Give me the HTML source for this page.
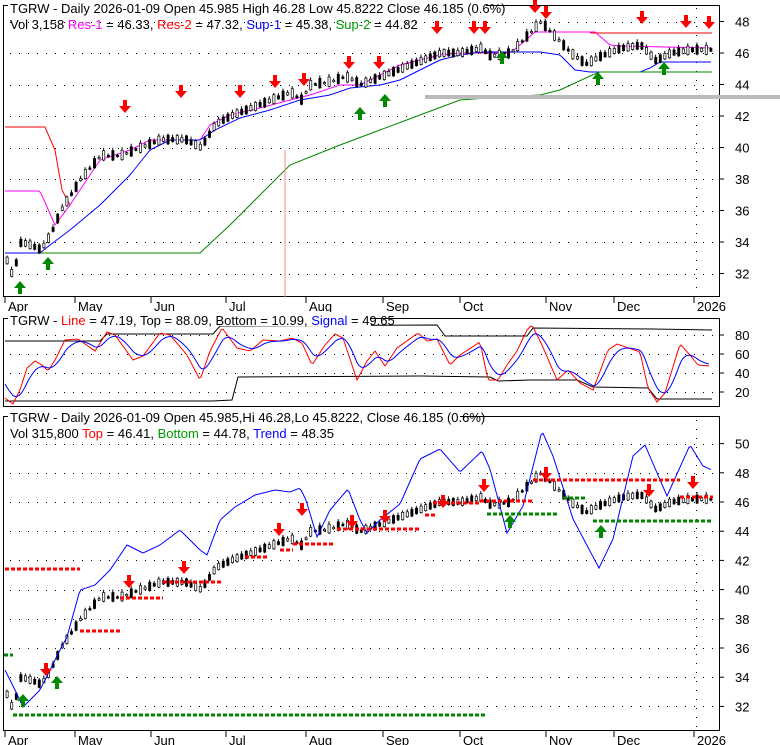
<!DOCTYPE html>
<html><head><meta charset="utf-8"><style>
body{margin:0;background:#fff;width:780px;height:745px;overflow:hidden}
svg{display:block}
text{font-family:"Liberation Sans",sans-serif;font-size:13px}
</style></head><body>
<svg id="s" width="780" height="745" xmlns="http://www.w3.org/2000/svg">
<rect width="780" height="745" fill="#fff"/>
<rect x="3.5" y="5.5" width="716" height="291" fill="none" stroke="#000"/>
<rect x="3.5" y="318.5" width="716" height="88" fill="none" stroke="#000"/>
<rect x="3.5" y="416.5" width="716" height="314" fill="none" stroke="#000"/>
<g id="g"></g>
<rect x="8" y="0" width="478" height="15" fill="#fff"/>
<text x="10" y="13">TGRW - Daily 2026-01-09 Open 45.985  High 46.28  Low 45.8222  Close 46.185 (0.6%)</text>
<text x="10" y="29">Vol 3,158 <tspan fill="#f0f">Res-1</tspan> = 46.33, <tspan fill="#f00">Res-2</tspan> = 47.32, <tspan fill="#00f">Sup-1</tspan> = 45.38, <tspan fill="#090">Sup-2</tspan> = 44.82</text>
<rect x="8" y="312" width="363" height="14" fill="#fff"/>
<text x="10" y="325">TGRW - <tspan fill="#f00">Line</tspan> = 47.19, Top = 88.09, Bottom = 10.99, <tspan fill="#00f">Signal</tspan> = 49.65</text>
<rect x="8" y="410" width="452" height="14" fill="#fff"/>
<text x="10" y="422">TGRW - Daily 2026-01-09 Open 45.985,Hi 46.28,Lo 45.8222, Close 46.185 (0.6%)</text>
<text x="10" y="438">Vol 315,800 <tspan fill="#f00">Top</tspan> = 46.41, <tspan fill="#090">Bottom</tspan> = 44.78, <tspan fill="#00f">Trend</tspan> = 48.35</text>
</svg>
<script>
var g=document.getElementById('g'),h='';
function P(pts,c,w,extra){h+='<polyline fill="none" stroke="'+c+'" stroke-width="'+(w||1)+'" '+(extra||'')+' points="'+pts.map(function(p){return p.join(',')}).join(' ')+'"/>';}
function T(x,y,s){h+='<text x="'+x+'" y="'+y+'">'+s+'</text>';}
function dots(y,x0,x1){for(var x=x0;x<x1;x+=9)h+='<rect x="'+x+'" y="'+y+'" width="1" height="1" fill="#000"/>';}
function vdots(x,y0,y1){for(var y=y0;y<y1;y+=9)h+='<rect x="'+x+'" y="'+y+'" width="1" height="1" fill="#000"/>';}
var months=[['Apr',8],['May',78],['Jun',154],['Jul',229],['Aug',309],['Sep',386],['Oct',463],['Nov',549],['Dec',617],['2026',697]];
for(var v=32;v<=48;v+=2){var y=53+(46-v)*15.75;if(y>8&&y<295){dots(Math.round(y),10,718);h+='<line x1="720" y1="'+y+'" x2="724" y2="'+y+'" stroke="#000"/>';T(735,y+5,v);}}
for(var v=20;v<=80;v+=20){var y=392-(v-20)/60*57;dots(Math.round(y),10,718);h+='<line x1="720" y1="'+y+'" x2="724" y2="'+y+'" stroke="#000"/>';T(735,y+5,v);}
for(var v=32;v<=50;v+=2){var y=502+(46-v)*14.6;dots(Math.round(y),10,718);h+='<line x1="720" y1="'+y+'" x2="724" y2="'+y+'" stroke="#000"/>';T(735,y+5,v);}
months.forEach(function(m){h+='<line x1="'+(m[1]-3)+'" y1="297" x2="'+(m[1]-3)+'" y2="303" stroke="#000"/>';T(m[1],311,m[0]);
 h+='<line x1="'+(m[1]-3)+'" y1="731" x2="'+(m[1]-3)+'" y2="737" stroke="#000"/>';T(m[1],745,m[0]);});
vdots(696,8,296);vdots(696,420,730);
function interp(K,x){if(x<=K[0][0])return K[0][1];for(var i=0;i<K.length-1;i++)if(x<=K[i+1][0]){var t=(x-K[i][0])/(K[i+1][0]-K[i][0]);return K[i][1]+t*(K[i+1][1]-K[i][1]);}return K[K.length-1][1];}
var K=[[5,33],[12,31.8],[20,34],[30,33.8],[40,33.5],[50,34.5],[60,36],[70,37],[80,38],[100,39.5],[120,39.5],[140,40],[160,40.5],[185,40.5],[200,40],[215,41.5],[230,42],[250,42.5],[270,43],[290,43.5],[300,43],[310,44],[330,44.2],[345,44.5],[360,44],[380,44.5],[400,45],[420,45.5],[440,46],[460,46],[480,46.3],[490,45.8],[510,46],[525,47],[540,48],[555,47],[570,46],[585,45.3],[600,45.8],[620,46.3],[640,46.5],[655,45.5],[670,46],[690,46.2],[712,46.2]];
function val(x){return interp(K,x);}
function y1(v){return 53+(46-v)*15.75;}function y3(v){return 502+(46-v)*14.6;}
function curve(KP){var o=[];for(var x=KP[0][0];x<=KP[KP.length-1][0];x+=2)o.push([x,interp(KP,x)]);return o;}
P([[5,127],[45,127],[55,150],[62,190],[70,205]],'#f00');
P(curve([[5,191],[40,191],[55,225],[70,205],[100,160],[130,150],[150,140],[200,140],[210,125],[230,115],[260,108],[290,100],[310,95],[340,85],[360,85],[380,75],[400,65],[420,60],[440,55],[460,53],[510,53],[520,45],[535,32],[595,32],[610,45],[620,46],[712,48]]),'#f0f');
P(curve([[5,253],[40,253],[50,245],[70,230],[100,205],[130,175],[150,150],[170,140],[200,140],[215,130],[240,118],[270,110],[300,100],[330,95],[350,88],[380,85],[400,80],[420,70],[440,60],[460,55],[480,52],[540,52],[560,55],[575,70],[590,72],[640,72],[650,68],[660,62],[712,62]]),'#00f');
P([[40,253],[200,253],[230,225],[260,195],[290,165],[340,145],[380,130],[420,115],[460,100],[500,97],[540,95],[560,90],[590,76],[600,72],[712,72]],'#080');
P([[425,97],[780,97]],'#bbb',4);
P([[590,33],[712,33]],'#f00');
P([[285,150],[285,297]],'#f88');
function candles(yf){for(var x=6;x<=712;x+=4.6){var v=val(x),d=Math.sin(x*1.7)*0.3,o=v+d,c=v-d;var ya=yf(o),yb=yf(c),top=Math.min(ya,yb),bh=Math.max(1.5,Math.abs(ya-yb));var hi=top-1-Math.abs(Math.sin(x))*2,lo=top+bh+1;
h+='<line x1="'+(x+1)+'" y1="'+hi+'" x2="'+(x+1)+'" y2="'+lo+'" stroke="#000"/>';h+='<rect x="'+x+'" y="'+top+'" width="2.2" height="'+bh+'" fill="'+(o>c?'#000':'#fff')+'" stroke="#000" stroke-width="0.7"/>';}}
candles(y1);candles(y3);
function arrowD(x,y){h+='<path d="M'+(x-2)+','+(y-12)+'h4v6h4l-6,7l-6,-7h4z" fill="#f00"/>';}
function arrowU(x,y){h+='<path d="M'+(x-2)+','+(y+12)+'h4v-6h4l-6,-7l-6,7h4z" fill="#080"/>';}
[[125,112],[181,97],[240,97],[275,87],[304,85],[349,68],[379,68],[437,33],[474,33],[485,33],[535,12],[546,18],[642,23],[686,27],[709,28]].forEach(function(a){arrowD(a[0],a[1])});
[[20,282],[48,258],[360,108],[385,95],[502,52],[598,73],[664,63]].forEach(function(a){arrowU(a[0],a[1])});
// panel2
var R=[[5,398],[13,404],[20,390],[27,368],[35,361],[42,365],[48,371],[55,360],[65,340],[78,339],[95,351],[107,332],[115,335],[133,360],[143,356],[160,333],[170,335],[187,355],[200,380],[210,351],[222,328],[237,348],[250,351],[263,340],[280,341],[292,338],[302,343],[312,365],[325,345],[335,334],[343,338],[357,380],[367,361],[375,351],[385,366],[397,348],[418,333],[427,341],[437,339],[450,365],[460,355],[480,342],[488,380],[498,380],[507,365],[517,351],[527,330],[532,325],[542,345],[557,380],[568,370],[580,383],[593,390],[608,350],[617,344],[640,352],[648,388],[657,402],[665,393],[680,344],[690,355],[698,365],[710,366]];
var ln=curve(R),sig=[],sv=380;for(var i=0;i<ln.length;i++){sv=sv+(ln[i][1]-sv)*0.22;sig.push([ln[i][0],sv]);}
P([[5,401],[213,401],[232,400],[238,377],[420,376],[490,377],[498,381],[530,380],[577,380],[593,387],[648,388],[657,399],[712,399]],'#000');
P([[5,341],[100,341],[107,334],[213,334],[220,326],[437,325],[445,336],[527,336],[533,328],[653,329],[712,330]],'#000');
P(ln,'#f00');P(sig,'#00f');
// panel3
P(curve([[5,670],[15,690],[23,707],[40,690],[60,650],[67,637],[80,590],[95,585],[110,570],[127,545],[143,553],[160,545],[180,530],[200,550],[207,555],[220,520],[235,507],[255,495],[275,490],[290,492],[300,488],[306,500],[317,537],[330,510],[348,489],[360,520],[367,533],[380,520],[400,504],[420,459],[440,449],[460,472],[482,451],[490,469],[507,533],[523,506],[542,431],[553,456],[573,519],[599,568],[613,539],[633,456],[645,445],[667,496],[690,445],[703,466],[712,470]]),'#00f');
function dash(x0,x1,y,c){P([[x0,y],[x1,y]],c,3,'stroke-dasharray="4,2"');}
dash(5,80,569,'#f00');dash(80,120,631,'#f00');dash(120,163,598,'#f00');dash(163,223,582,'#f00');dash(245,267,557,'#f00');dash(280,293,550,'#f00');dash(293,335,544,'#f00');dash(337,420,529,'#f00');dash(425,435,515,'#f00');dash(433,480,503,'#f00');dash(480,533,501,'#f00');dash(533,680,480,'#f00');dash(680,713,497,'#f00');
dash(13,485,715,'#080');dash(4,13,655,'#080');dash(487,558,514,'#080');dash(563,585,498,'#080');dash(593,713,521,'#080');
[[46,675],[129,587],[184,573],[279,535],[302,515],[352,527],[385,522],[443,507],[484,491],[546,479],[649,496],[693,488]].forEach(function(a){arrowD(a[0],a[1])});
[[23,695],[57,677],[510,516],[601,526]].forEach(function(a){arrowU(a[0],a[1])});
g.innerHTML=h;
</script>
</body></html>
